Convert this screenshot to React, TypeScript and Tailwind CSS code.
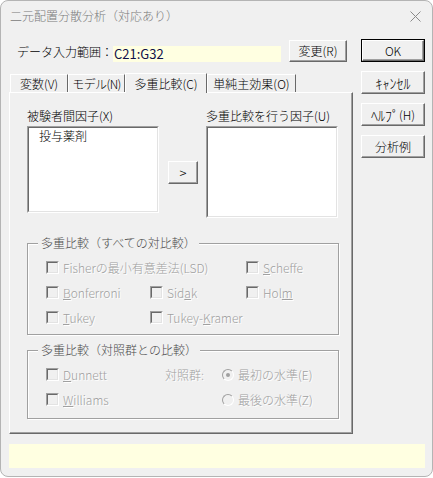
import React from "react";

const FONT = "font-['Noto_Sans_CJK_JP','Noto_Sans_CJK_SC',sans-serif] font-light";
const DIS = "text-[#a0a0a0] [text-shadow:1px_1px_0_#ffffff]";

function Btn({ children, className = "" }: { children: React.ReactNode; className?: string }) {
  return (
    <div
      className={`flex items-center justify-center bg-[#f0f0f0] border border-t-white border-l-white border-r-[#696969] border-b-[#696969] shadow-[inset_-1px_-1px_0_#a0a0a0] text-[12px] leading-[14px] text-black whitespace-nowrap ${className}`}
    >
      {children}
    </div>
  );
}

function Check() {
  return (
    <span className="flex w-[13px] h-[13px] shrink-0 border border-t-[#a0a0a0] border-l-[#a0a0a0] border-r-white border-b-white">
      <span className="flex-1 border border-t-[#696969] border-l-[#696969] border-r-[#e3e3e3] border-b-[#e3e3e3] bg-[#f0f0f0]" />
    </span>
  );
}

function CheckItem({ children, w }: { children: React.ReactNode; w?: string }) {
  return (
    <div className={`flex items-center h-[25px] ${w ?? ""}`}>
      <Check />
      <span className={`ml-[4px] text-[12px] leading-[14px] whitespace-nowrap ${DIS}`}>{children}</span>
    </div>
  );
}

function Radio({ on }: { on?: boolean }) {
  return (
    <span className="flex items-center justify-center w-[12px] h-[12px] shrink-0 rounded-full border border-t-[#a0a0a0] border-l-[#a0a0a0] border-r-white border-b-white bg-[#f0f0f0]">
      {on && <span className="w-[4px] h-[4px] rounded-full bg-[#a0a0a0]" />}
    </span>
  );
}

function Group({ title, h, children }: { title: string; h: string; children: React.ReactNode }) {
  return (
    <div
      className={`relative w-[312px] ${h} border border-[#a0a0a0] shadow-[inset_1px_1px_0_#ffffff,1px_1px_0_#ffffff]`}
    >
      <span className="absolute left-[10px] top-[-8px] px-[3px] bg-[#f0f0f0] text-[12px] leading-[14px] text-[#4a4a4a] whitespace-nowrap">
        {title}
      </span>
      {children}
    </div>
  );
}

function Tab({ label, w, active, tight }: { label: string; w: string; active?: boolean; tight?: boolean }) {
  const tr = tight ? "tracking-[-0.6px]" : "";
  if (active) {
    return (
      <div
        className={`relative z-10 -mb-px ${w} h-[20px] flex items-center justify-center bg-[#f0f0f0] border-t border-l border-white border-r border-r-[#696969] text-[12px] leading-[14px] text-black whitespace-nowrap ${tr}`}
      >
        {label}
      </div>
    );
  }
  return (
    <div
      className={`${w} h-[18px] flex items-center justify-center border-t border-l border-white border-r border-r-[#696969] text-[12px] leading-[14px] text-black whitespace-nowrap ${tr}`}
    >
      {label}
    </div>
  );
}

function ListBox({ className = "", children }: { className?: string; children?: React.ReactNode }) {
  return (
    <div className={`flex border border-t-[#a0a0a0] border-l-[#a0a0a0] border-r-white border-b-white ${className}`}>
      <div className="flex-1 bg-white border border-t-[#696969] border-l-[#696969] border-r-[#e3e3e3] border-b-[#e3e3e3]">
        {children}
      </div>
    </div>
  );
}

export default function App() {
  return (
    <div className={`w-[433px] h-[478px] bg-white ${FONT}`}>
      <div className="w-[433px] h-[477px] rounded-[8px] border border-[#b4b4b4] bg-[#f0f0f0] flex flex-col overflow-hidden">
        {/* title bar */}
        <div className="h-[30px] flex items-center justify-between pl-[9px] pr-[10px] shrink-0">
          <span className="text-[12px] leading-[14px] text-[#7a7a7a]">二元配置分散分析（対応あり）</span>
          <svg width="11" height="11" viewBox="0 0 11 11" className="mr-[1px]">
            <path d="M0.5 0.5 L10.5 10.5 M10.5 0.5 L0.5 10.5" stroke="#8a8a8a" strokeWidth="1" fill="none" />
          </svg>
        </div>

        {/* main */}
        <div className="flex pl-[8px]">
          {/* left column */}
          <div className="w-[344px] flex flex-col">
            <div className="mt-[9px] h-[22px] flex items-start pl-[8px]">
              <span className="w-[96px] mt-[5px] text-[12px] leading-[14px] text-black whitespace-nowrap">データ入力範囲：</span>
              <div className="w-[168px] h-[16px] mt-[6px] bg-[#ffffe1] text-[13px] leading-[16px] text-[#10104a] pl-[1px] font-normal">
                C21:G32
              </div>
              <Btn className="ml-[8px] w-[58px] h-[22px]">変更(R)</Btn>
            </div>

            {/* tabs */}
            <div className="mt-[11px] h-[19px] flex items-end pl-[1px]">
              <Tab label="変数(V)" w="w-[58px]" />
              <Tab label="モデル(N)" w="w-[57px]" tight />
              <Tab label="多重比較(C)" w="w-[82px]" active />
              <Tab label="単純主効果(O)" w="w-[89px]" />
            </div>

            {/* panel */}
            <div className="h-[342px] border-t border-l border-white border-r border-b border-r-[#696969] border-b-[#696969] shadow-[inset_-1px_-1px_0_#a0a0a0] pl-[17px] pt-[16px] flex flex-col">
              <div className="flex">
                <div className="w-[132px] flex flex-col">
                  <span className="h-[14px] text-[12px] leading-[14px] text-black whitespace-nowrap">被験者間因子(X)</span>
                  <ListBox className="mt-[3px] h-[87px]">
                    <div className="pl-[10px] pt-[1px] text-[12px] leading-[14px] text-black">投与薬剤</div>
                  </ListBox>
                </div>
                <Btn className="ml-[9px] mt-[52px] w-[30px] h-[23px] text-[13px]">&gt;</Btn>
                <div className="ml-[8px] w-[132px] flex flex-col">
                  <span className="h-[14px] text-[12px] leading-[14px] text-black whitespace-nowrap">多重比較を行う因子(U)</span>
                  <ListBox className="mt-[3px] h-[92px]" />
                </div>
              </div>

              <div className="mt-[25px]">
                <Group title="多重比較（すべての対比較）" h="h-[92px]">
                  <div className="pt-[11px] pl-[18px] grid grid-cols-[104px_96px_auto]">
                    <CheckItem>Fisherの最小有意差法(LSD)</CheckItem>
                    <div />
                    <CheckItem>
                      <u>S</u>cheffe
                    </CheckItem>
                    <CheckItem>
                      <u>B</u>onferroni
                    </CheckItem>
                    <CheckItem>
                      Sid<u>a</u>k
                    </CheckItem>
                    <CheckItem>
                      Hol<u>m</u>
                    </CheckItem>
                    <CheckItem>
                      <u>T</u>ukey
                    </CheckItem>
                    <CheckItem>
                      Tukey-<u>K</u>ramer
                    </CheckItem>
                  </div>
                </Group>
              </div>

              <div className="mt-[15px]">
                <Group title="多重比較（対照群との比較）" h="h-[69px]">
                  <div className="pt-[11px] pl-[18px] flex flex-col">
                    <div className="flex items-center h-[25px]">
                      <CheckItem w="w-[104px]">
                        <u>D</u>unnett
                      </CheckItem>
                      <span className={`w-[72px] pl-[15px] text-[12px] leading-[14px] whitespace-nowrap ${DIS}`}>対照群:</span>
                      <Radio on />
                      <span className={`ml-[4px] text-[12px] leading-[14px] whitespace-nowrap ${DIS}`}>最初の水準(E)</span>
                    </div>
                    <div className="flex items-center h-[25px]">
                      <CheckItem w="w-[104px]">
                        <u>W</u>illiams
                      </CheckItem>
                      <span className="w-[72px]" />
                      <Radio />
                      <span className={`ml-[4px] text-[12px] leading-[14px] whitespace-nowrap ${DIS}`}>最後の水準(Z)</span>
                    </div>
                  </div>
                </Group>
              </div>
            </div>
          </div>

          {/* right column */}
          <div className="ml-[8px] w-[64px] flex flex-col gap-[9px] pt-[8px]">
            <div className="border border-black">
              <Btn className="h-[21px]">OK</Btn>
            </div>
            <Btn className="h-[23px] text-[14px]">ｷｬﾝｾﾙ</Btn>
            <Btn className="h-[23px]">
              <span className="text-[14px]">ﾍﾙﾌﾟ</span>
              <span>(H)</span>
            </Btn>
            <Btn className="h-[23px]">分析例</Btn>
          </div>
        </div>

        {/* status bar */}
        <div className="mt-[10px] ml-[8px] w-[416px] h-[24px] bg-[#ffffe1]" />
      </div>
    </div>
  );
}
